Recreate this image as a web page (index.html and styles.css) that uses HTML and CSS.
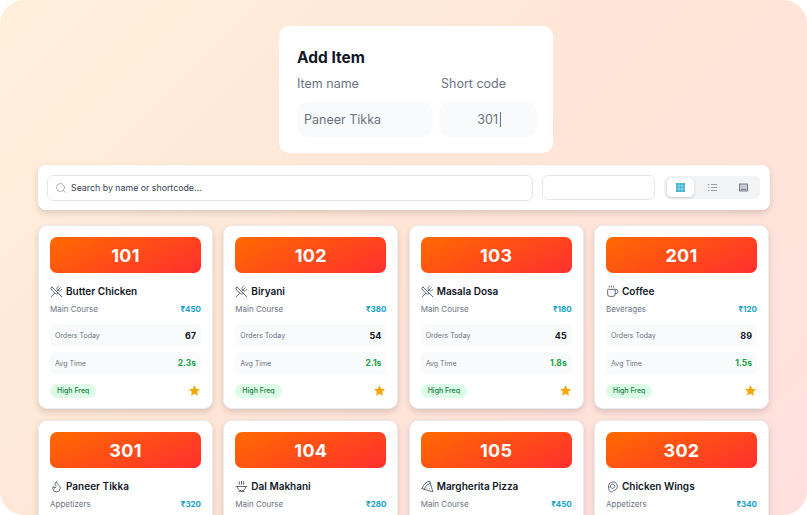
FILE: index.html
```html
<!DOCTYPE html>
<html lang="en">
<head>
    <meta charset="UTF-8">
    <meta name="viewport" content="width=device-width, initial-scale=1.0">
    <title>Menu Items</title>
    <link rel="stylesheet" href="styles.css">
</head>
<body>
    <svg class="icon-defs" aria-hidden="true">
        <symbol id="i-utensils" viewBox="0 0 24 24"><path d="m16 2-2.3 2.3a3 3 0 0 0 0 4.2l1.8 1.8a3 3 0 0 0 4.2 0L22 8"/><path d="M15 15 3.3 3.3a4.2 4.2 0 0 0 0 6l7.3 7.3c.7.7 2 .7 2.8 0L15 15Zm0 0 7 7"/><path d="m2.1 21.8 6.4-6.3"/><path d="m19 5-7 7"/></symbol>
        <symbol id="i-coffee" viewBox="0 0 24 24"><path d="M10 2v2"/><path d="M14 2v2"/><path d="M6 2v2"/><path d="M16 8a1 1 0 0 1 1 1v8a4 4 0 0 1-4 4H7a4 4 0 0 1-4-4V9a1 1 0 0 1 1-1h14a4 4 0 1 1 0 8h-1"/></symbol>
        <symbol id="i-flame" viewBox="0 0 24 24"><path d="M8.5 14.5A2.5 2.5 0 0 0 11 12c0-1.38-.5-2-1-3-1.072-2.143-.224-4.054 2-6 .5 2.5 2 4.9 4 6.5 2 1.6 3 3.5 3 5.5a7 7 0 1 1-14 0c0-1.153.433-2.294 1-3a2.5 2.5 0 0 0 2.5 2.5z"/></symbol>
        <symbol id="i-soup" viewBox="0 0 24 24"><path d="M4 12a8 8 0 0 0 16 0"/><path d="M7 21h10"/><path d="M2 12h20"/><path d="M8 3v5"/><path d="M12 3v5"/><path d="M16 3v5"/></symbol>
        <symbol id="i-pizza" viewBox="0 0 24 24"><path d="M15 11h.01"/><path d="M11 15h.01"/><path d="M16 16h.01"/><path d="m2 16 20 6-6-20A20 20 0 0 0 2 16"/><path d="M5.71 17.11a17.04 17.04 0 0 1 11.4-11.42"/></symbol>
        <symbol id="i-drumstick" viewBox="0 0 24 24"><path d="M5 13a8 8 0 1 1 11 6c-2 1-3 1-4 2-2 2-5 1-6-1-1-3-1-5-1-7z"/><path d="M9 14a4 4 0 1 1 5 1c-1 .5-2 1-3 1"/></symbol>
        <symbol id="i-star" viewBox="0 0 24 24"><path d="M12 2l3.1 6.6 7.1.9-5.2 4.9 1.4 7.1L12 17.9l-6.4 3.6 1.4-7.1-5.2-4.9 7.1-.9z"/></symbol>
    </svg>

    <div class="frame">
        <div class="add-card">
            <h1>Add Item</h1>
            <div class="add-fields">
                <div class="field field-name">
                    <label>Item name</label>
                    <div class="fake-input">Paneer Tikka</div>
                </div>
                <div class="field field-code">
                    <label>Short code</label>
                    <div class="fake-input code-input"><span>301</span><i class="caret"></i></div>
                </div>
            </div>
        </div>

        <div class="toolbar">
            <div class="search">
                <svg class="search-icon" viewBox="0 0 24 24"><circle cx="11" cy="11" r="8"/><path d="m21 21-4.3-4.3"/></svg>
                <span>Search by name or shortcode...</span>
            </div>
            <div class="select-box"></div>
            <div class="view-toggle">
                <div class="view-btn active">
                    <svg class="view-icon" viewBox="0 0 9 9"><rect class="grid-bg" width="9" height="9"/><path class="grid-lines" d="M3 0v9M6 0v9M0 3h9M0 6h9"/></svg>
                </div>
                <div class="view-btn">
                    <svg class="view-icon list-icon" viewBox="0 0 9 9"><path d="M0 1.5h1.5M3 1.5h6M0 4.5h1.5M3 4.5h6M0 7.5h1.5M3 7.5h6"/></svg>
                </div>
                <div class="view-btn">
                    <svg class="view-icon board-icon" viewBox="0 0 9 9"><rect x=".5" y="1" width="8" height="7"/><path d="M2 6.4h5"/></svg>
                </div>
            </div>
        </div>

        <div class="items">
            <div class="item">
                <div class="code">101</div>
                <div class="item-title"><svg class="item-icon"><use href="#i-utensils"/></svg>Butter Chicken</div>
                <div class="item-meta"><span>Main Course</span><b>₹450</b></div>
                <div class="stat"><span>Orders Today</span><b>67</b></div>
                <div class="stat"><span>Avg Time</span><b class="good">2.3s</b></div>
                <div class="item-foot"><span class="badge">High Freq</span><svg class="star"><use href="#i-star"/></svg></div>
            </div>
            <div class="item">
                <div class="code">102</div>
                <div class="item-title"><svg class="item-icon"><use href="#i-utensils"/></svg>Biryani</div>
                <div class="item-meta"><span>Main Course</span><b>₹380</b></div>
                <div class="stat"><span>Orders Today</span><b>54</b></div>
                <div class="stat"><span>Avg Time</span><b class="good">2.1s</b></div>
                <div class="item-foot"><span class="badge">High Freq</span><svg class="star"><use href="#i-star"/></svg></div>
            </div>
            <div class="item">
                <div class="code">103</div>
                <div class="item-title"><svg class="item-icon"><use href="#i-utensils"/></svg>Masala Dosa</div>
                <div class="item-meta"><span>Main Course</span><b>₹180</b></div>
                <div class="stat"><span>Orders Today</span><b>45</b></div>
                <div class="stat"><span>Avg Time</span><b class="good">1.8s</b></div>
                <div class="item-foot"><span class="badge">High Freq</span><svg class="star"><use href="#i-star"/></svg></div>
            </div>
            <div class="item">
                <div class="code">201</div>
                <div class="item-title"><svg class="item-icon"><use href="#i-coffee"/></svg>Coffee</div>
                <div class="item-meta"><span>Beverages</span><b>₹120</b></div>
                <div class="stat"><span>Orders Today</span><b>89</b></div>
                <div class="stat"><span>Avg Time</span><b class="good">1.5s</b></div>
                <div class="item-foot"><span class="badge">High Freq</span><svg class="star"><use href="#i-star"/></svg></div>
            </div>
            <div class="item">
                <div class="code">301</div>
                <div class="item-title"><svg class="item-icon"><use href="#i-flame"/></svg>Paneer Tikka</div>
                <div class="item-meta"><span>Appetizers</span><b>₹320</b></div>
            </div>
            <div class="item">
                <div class="code">104</div>
                <div class="item-title"><svg class="item-icon"><use href="#i-soup"/></svg>Dal Makhani</div>
                <div class="item-meta"><span>Main Course</span><b>₹280</b></div>
            </div>
            <div class="item">
                <div class="code">105</div>
                <div class="item-title"><svg class="item-icon"><use href="#i-pizza"/></svg>Margherita Pizza</div>
                <div class="item-meta"><span>Main Course</span><b>₹450</b></div>
            </div>
            <div class="item">
                <div class="code">302</div>
                <div class="item-title"><svg class="item-icon"><use href="#i-drumstick"/></svg>Chicken Wings</div>
                <div class="item-meta"><span>Appetizers</span><b>₹340</b></div>
            </div>
        </div>
    </div>
</body>
</html>
```

FILE: styles.css
```css
* {
    box-sizing: border-box;
}
html, body {
    margin: 0;
    padding: 0;
    height: 100%;
    background: #fff;
    overflow: hidden;
}
body {
    font-family: Inter, "Liberation Sans", sans-serif;
    color: #111827;
}
.icon-defs {
    display: none;
}
.frame {
    width: 807px;
    height: 515px;
    padding: 26px 37px 0 38px;
    border-radius: 24px;
    overflow: hidden;
    background: linear-gradient(135deg, #fff0dc 0%, #ffe6d6 45%, #ffe0de 100%);
}

/* add item card */
.add-card {
    width: 274px;
    height: 127px;
    margin-left: 241px;
    padding: 22px 16px 0 18px;
    background: #fff;
    border-radius: 10px;
}
.add-card h1 {
    margin: 0;
    font-size: 15.5px;
    line-height: 20px;
    font-weight: 700;
    color: #111827;
}
.add-fields {
    display: flex;
    gap: 6px;
    margin-top: 8px;
}
.field label {
    display: block;
    font-size: 12.5px;
    line-height: 16px;
    color: #6b7280;
}
.field-name {
    width: 136px;
}
.field-code {
    width: 98px;
}
.field-code label {
    padding-left: 2px;
}
.fake-input {
    height: 35px;
    margin-top: 10px;
    padding: 0 7px;
    display: flex;
    align-items: center;
    font-size: 12.5px;
    color: #6b7280;
    background: #f9fafb;
    border-radius: 10px;
}
.code-input {
    justify-content: flex-end;
    padding-right: 36px;
}
.caret {
    width: 1px;
    height: 15px;
    margin-left: 2px;
    background: #6b7280;
}

/* toolbar */
.toolbar {
    display: flex;
    align-items: center;
    height: 45px;
    margin-top: 12px;
    padding: 0 10px 0 9px;
    background: #fff;
    border-radius: 8px;
    box-shadow: 0 3px 6px rgba(0, 0, 0, 0.14);
}
.search {
    display: flex;
    align-items: center;
    gap: 4px;
    width: 486px;
    height: 26px;
    padding-left: 7px;
    border: 1px solid #e5e7eb;
    border-radius: 6px;
    font-size: 8.8px;
    color: #374151;
}
.search-icon {
    width: 12px;
    height: 12px;
    fill: none;
    stroke: #9ca3af;
    stroke-width: 1.7;
    stroke-linecap: round;
}
.select-box {
    width: 113px;
    height: 25px;
    margin-left: 9px;
    border: 1px solid #e5e7eb;
    border-radius: 6px;
}
.view-toggle {
    display: flex;
    gap: 5px;
    width: 96px;
    height: 23px;
    margin-left: 9px;
    padding: 2px 3px;
    background: #f3f4f6;
    border-radius: 6px;
}
.view-btn {
    width: 27px;
    display: flex;
    align-items: center;
    justify-content: center;
    border-radius: 5px;
}
.view-btn.active {
    background: #fff;
    box-shadow: 0 1px 3px rgba(0, 0, 0, 0.18);
}
.view-icon {
    width: 9px;
    height: 9px;
}
.grid-bg {
    fill: #38b2cf;
}
.grid-lines {
    stroke: #bfe9f2;
    stroke-width: .6;
}
.list-icon {
    fill: none;
    stroke: #8b929c;
    stroke-width: .9;
}
.board-icon {
    fill: #c9cdd3;
    stroke: #6b7280;
    stroke-width: .9;
}

/* item cards */
.items {
    display: grid;
    grid-template-columns: repeat(4, 175px);
    grid-auto-rows: 184px;
    gap: 11px 10.33px;
    margin-top: 15px;
}
.item {
    padding: 11px 11px 0;
    background: #fff;
    border: 1px solid #e9ebef;
    border-radius: 9px;
    box-shadow: 0 3px 6px rgba(0, 0, 0, 0.14);
}
.code {
    height: 36px;
    display: flex;
    align-items: center;
    justify-content: center;
    font-size: 18px;
    font-weight: 700;
    letter-spacing: .3px;
    color: #fff;
    background: linear-gradient(155deg, #ff6a00, #ff2f2f);
    border-radius: 7px;
}
.item-title {
    display: flex;
    align-items: center;
    gap: 3px;
    height: 14px;
    margin-top: 11px;
    font-size: 10px;
    font-weight: 600;
    color: #111827;
}
.item-icon {
    width: 13px;
    height: 13px;
    fill: none;
    stroke: #4b5563;
    stroke-width: 1.6;
    stroke-linecap: round;
    stroke-linejoin: round;
}
.item-meta {
    display: flex;
    justify-content: space-between;
    align-items: center;
    height: 12px;
    margin-top: 5px;
    font-size: 8px;
    color: #6b7280;
}
.item-meta b {
    font-size: 8px;
    font-weight: 700;
    color: #17a2c4;
}
.stat {
    display: flex;
    justify-content: space-between;
    align-items: center;
    height: 22px;
    margin-top: 6px;
    padding: 0 5px;
    font-size: 7px;
    color: #6b7280;
    background: #f9fafb;
    border-radius: 5px;
}
.item-meta + .stat {
    margin-top: 9px;
}
.stat b {
    font-size: 9px;
    font-weight: 700;
    color: #111827;
}
.stat b.good {
    font-size: 8.5px;
    color: #16a34a;
}
.item-foot {
    display: flex;
    justify-content: space-between;
    align-items: center;
    height: 15px;
    margin-top: 9px;
}
.badge {
    display: flex;
    align-items: center;
    height: 14px;
    padding: 0 7px;
    font-size: 7px;
    font-weight: 500;
    color: #15803d;
    background: #dcfce7;
    border-radius: 7px;
}
.star {
    width: 13px;
    height: 13px;
    fill: #f5a70a;
}
```
